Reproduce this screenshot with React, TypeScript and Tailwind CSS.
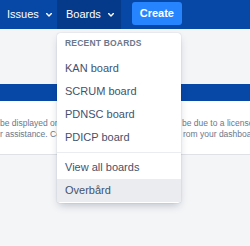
const recentBoards = ["KAN board", "SCRUM board", "PDNSC board", "PDICP board"];

function Chevron() {
  return (
    <svg width="6" height="4" viewBox="0 0 6 4" className="shrink-0">
      <path d="M0.6 0.6 L3 3 L5.4 0.6" fill="none" stroke="white" strokeWidth="1.4" strokeLinecap="round" strokeLinejoin="round" />
    </svg>
  );
}

function NavItem({ label, active }: { label: string; active?: boolean }) {
  return (
    <div
      className={`flex items-center pr-[7px] ${active ? "bg-[#053A8A] pl-[9px]" : "pl-[7px]"}`}
    >
      <span className="text-[11px] text-white">{label}</span>
      <span className="ml-[7px] mt-[1px]">
        <Chevron />
      </span>
    </div>
  );
}

export default function App() {
  return (
    <div className="relative w-[250px] h-[246px] overflow-hidden bg-[#F4F5F7] font-['Liberation_Sans',Arial,sans-serif]">
      {/* Top nav */}
      <div className="flex h-[29px] bg-[#0747A6]">
        <div className="flex w-[57px]">
          <NavItem label="Issues" />
        </div>
        <NavItem label="Boards" active />
        <button className="ml-[11px] mt-[2px] h-[23px] w-[50px] rounded-[3px] bg-[#2684FF] text-[11px] font-semibold text-white">
          Create
        </button>
      </div>

      {/* Page behind the menu */}
      <div className="h-[55px]" />
      <div className="h-[17px] bg-[#0747A6]" />
      <div className="h-[54px] bg-white pt-[17px] border-b border-[#DFE1E6] text-[8.5px] leading-[11px] text-[#6B778C]">
        <div className="flex whitespace-nowrap">
          <span className="w-[57px] shrink-0 overflow-hidden">be displayed on</span>
          <span className="w-[124px] shrink-0" />
          <span className="shrink-0 pl-[1px]">be due to a license</span>
        </div>
        <div className="flex whitespace-nowrap">
          <span className="w-[57px] shrink-0 overflow-hidden">r assistance. Co</span>
          <span className="w-[124px] shrink-0" />
          <span className="shrink-0 pl-[2px]">rom your dashboard</span>
        </div>
      </div>

      {/* Boards dropdown */}
      <div className="absolute left-[57px] top-[33px] w-[124px] rounded-[3px] bg-white pb-[1px] shadow-[0_4px_8px_-2px_rgba(9,30,66,0.25),0_0_1px_rgba(9,30,66,0.31)]">
        <div className="flex h-[24px] items-end px-[8px] pb-[7px] text-[8.5px] font-bold tracking-[0.2px] text-[#6B778C]">
          RECENT BOARDS
        </div>
        {recentBoards.map((b) => (
          <div key={b} className="flex h-[23px] items-center px-[8px] text-[11px] text-[#42526E]">
            {b}
          </div>
        ))}
        <div className="flex h-[7px] items-center">
          <div className="h-px w-full bg-[#EBECF0]" />
        </div>
        <div className="flex h-[23px] items-center px-[8px] text-[11px] text-[#42526E]">View all boards</div>
        <div className="flex h-[23px] items-center bg-[#EBECF0] px-[8px] text-[11px] text-[#42526E]">Overbård</div>
      </div>
    </div>
  );
}
